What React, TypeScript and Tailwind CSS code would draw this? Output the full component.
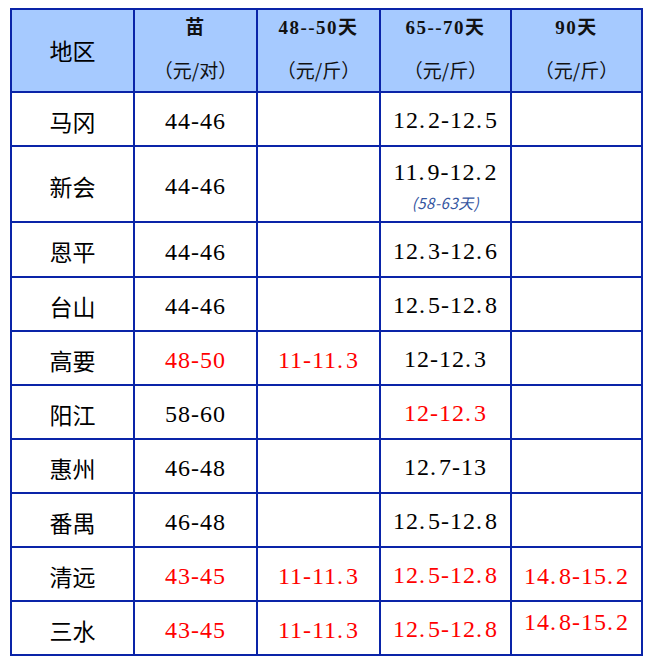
const rows: {
  name: string;
  h: string;
  c1: string;
  c2: string;
  c3: string;
  c4: string;
  red?: [boolean, boolean, boolean, boolean];
  note?: string;
  top4?: boolean;
}[] = [
  { name: "马冈", h: "h-[52px]", c1: "44-46", c2: "", c3: "12.2-12.5", c4: "" },
  { name: "新会", h: "h-[74px]", c1: "44-46", c2: "", c3: "11.9-12.2", c4: "", note: "(58-63天)" },
  { name: "恩平", h: "h-[53px]", c1: "44-46", c2: "", c3: "12.3-12.6", c4: "" },
  { name: "台山", h: "h-[52px]", c1: "44-46", c2: "", c3: "12.5-12.8", c4: "" },
  { name: "高要", h: "h-[52px]", c1: "48-50", c2: "11-11.3", c3: "12-12.3", c4: "", red: [true, true, false, false] },
  { name: "阳江", h: "h-[52px]", c1: "58-60", c2: "", c3: "12-12.3", c4: "", red: [false, false, true, false] },
  { name: "惠州", h: "h-[52px]", c1: "46-48", c2: "", c3: "12.7-13", c4: "" },
  { name: "番禺", h: "h-[52px]", c1: "46-48", c2: "", c3: "12.5-12.8", c4: "" },
  { name: "清远", h: "h-[52px]", c1: "43-45", c2: "11-11.3", c3: "12.5-12.8", c4: "14.8-15.2", red: [true, true, true, true] },
  { name: "三水", h: "h-[52px]", c1: "43-45", c2: "11-11.3", c3: "12.5-12.8", c4: "14.8-15.2", red: [true, true, true, true], top4: true },
];

const cjk = "[font-family:'Noto_Sans_CJK_SC',sans-serif]";
const num = "[font-family:'Liberation_Serif','Noto_Sans_CJK_SC',serif]";

// SimSun-style: the period takes a full digit cell
function Num({ v, red }: { v: string; red?: boolean }) {
  return (
    <span className={`${num} text-[24px] leading-none tracking-[1px] ${red ? "text-[#ff0000]" : "text-black"}`}>
      {v.split(".").map((part, i) => (
        <span key={i}>
          {i > 0 && <span className="inline-block w-[9px]">.</span>}
          {part}
        </span>
      ))}
    </span>
  );
}

function Head({ top, unit }: { top: string; unit: string }) {
  return (
    <div className="flex flex-col items-center justify-center gap-[20px] bg-[#a6caff] pb-[4px] text-[#111]">
      <span className={`${num} text-[19px] font-semibold leading-[22px] tracking-[1.5px]`}>{top}</span>
      <span className={`${cjk} text-[19px] leading-[22px]`}>{unit}</span>
    </div>
  );
}

export default function App() {
  return (
    <div className="min-h-[665px] w-[648px] bg-white pl-[10px] pt-[8px]">
      <div className="grid w-[633px] grid-cols-[121px_121px_121px_129px_129px] gap-[2px] bg-[#0a24a8] p-[2px]">
        <div className={`flex h-[81px] items-center justify-center bg-[#a6caff] ${cjk} text-[23px] text-black`}>
          地区
        </div>
        <Head top="苗" unit="（元/对）" />
        <Head top="48--50天" unit="（元/斤）" />
        <Head top="65--70天" unit="（元/斤）" />
        <Head top="90天" unit="（元/斤）" />

        {rows.map((r) => (
          <div key={r.name} className="contents">
            <div className={`flex ${r.h} items-center justify-center bg-white pt-[4px] ${cjk} text-[23px] text-black`}>
              {r.name}
            </div>
            <div className={`flex ${r.h} items-center justify-center bg-white pt-[4px]`}>
              <Num v={r.c1} red={r.red?.[0]} />
            </div>
            <div className={`flex ${r.h} items-center justify-center bg-white pt-[4px]`}>
              {r.c2 && <Num v={r.c2} red={r.red?.[1]} />}
            </div>
            <div className={`flex ${r.h} flex-col items-center justify-center bg-white`}>
              {r.note ? (
                <>
                  <div className="pt-[2px]">
                    <Num v={r.c3} red={r.red?.[2]} />
                  </div>
                  <span className={`${cjk} mt-[9px] text-[15px] italic leading-none tracking-[0.5px] text-[#34559f]`}>
                    {r.note}
                  </span>
                </>
              ) : (
                <div className="pt-[4px]">
                  <Num v={r.c3} red={r.red?.[2]} />
                </div>
              )}
            </div>
            <div
              className={`flex ${r.h} justify-center bg-white ${r.top4 ? "items-start pt-[8px]" : "items-center pt-[4px]"}`}
            >
              {r.c4 && <Num v={r.c4} red={r.red?.[3]} />}
            </div>
          </div>
        ))}
      </div>
    </div>
  );
}
